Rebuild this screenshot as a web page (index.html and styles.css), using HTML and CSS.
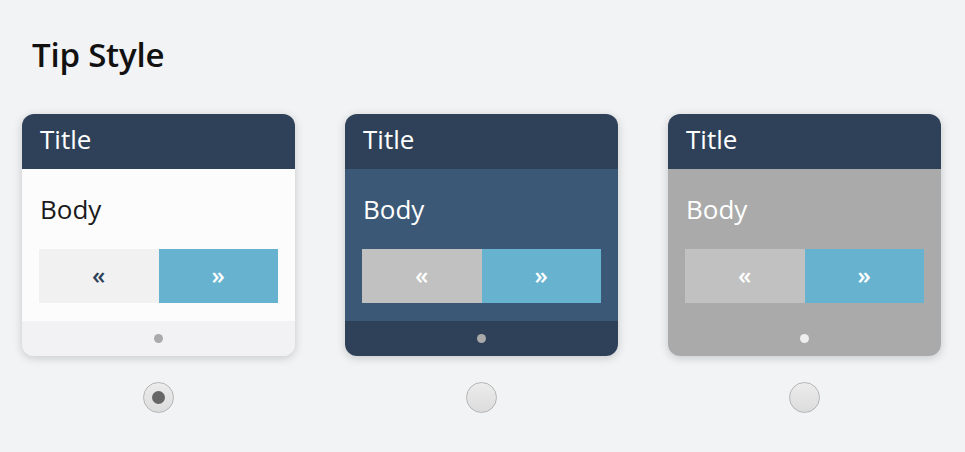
FILE: index.html
```html
<!DOCTYPE html>
<html lang="en">

<head>
    <meta charset="UTF-8">
    <meta name="viewport" content="width=device-width, initial-scale=1">
    <title>Tip Style</title>
    <link rel="stylesheet" href="styles.css">
</head>

<body>
    <h1 class="page-title">Tip Style</h1>

    <div class="styles">
        <label class="option">
            <div class="tip tip-light">
                <div class="tip-head">Title</div>
                <div class="tip-body">
                    <p>Body</p>
                    <div class="tip-nav">
                        <span class="nav-prev">&laquo;</span>
                        <span class="nav-next">&raquo;</span>
                    </div>
                </div>
                <div class="tip-foot"><span class="dot"></span></div>
            </div>
            <span class="radio checked"></span>
        </label>

        <label class="option">
            <div class="tip tip-dark">
                <div class="tip-head">Title</div>
                <div class="tip-body">
                    <p>Body</p>
                    <div class="tip-nav">
                        <span class="nav-prev">&laquo;</span>
                        <span class="nav-next">&raquo;</span>
                    </div>
                </div>
                <div class="tip-foot"><span class="dot"></span></div>
            </div>
            <span class="radio"></span>
        </label>

        <label class="option">
            <div class="tip tip-grey">
                <div class="tip-head">Title</div>
                <div class="tip-body">
                    <p>Body</p>
                    <div class="tip-nav">
                        <span class="nav-prev">&laquo;</span>
                        <span class="nav-next">&raquo;</span>
                    </div>
                </div>
                <div class="tip-foot"><span class="dot"></span></div>
            </div>
            <span class="radio"></span>
        </label>
    </div>
</body>

</html>
```

FILE: styles.css
```css
/* Base */
* {
    margin: 0;
    padding: 0;
    box-sizing: border-box;
}

body {
    font-family: "Open Sans", "Noto Sans", Arial, sans-serif;
    background-color: #f2f3f5;
    color: #1a1a1a;
    padding: 35px 22px 0 22px;
}

.page-title {
    font-size: 33px;
    font-weight: 600;
    line-height: 40px;
    letter-spacing: -0.2px;
    margin-left: 10px;
    margin-bottom: 39px;
    color: #111;
}

/* Style options */
.styles {
    display: flex;
    gap: 50px;
}

.option {
    display: flex;
    flex-direction: column;
    align-items: center;
    width: 273px;
    cursor: pointer;
}

/* Tip preview card */
.tip {
    width: 100%;
    border-radius: 12px;
    overflow: hidden;
    box-shadow: 0 2px 10px rgba(0, 0, 0, 0.18);
}

.tip-head {
    height: 55px;
    padding: 0 18px;
    background-color: #2f4159;
    color: #fff;
    font-size: 26px;
    line-height: 50px;
}

.tip-body {
    height: 152px;
    padding: 22px 17px 0 17px;
}

.tip-body p {
    font-size: 26px;
    line-height: 36px;
    padding-left: 1px;
    margin-bottom: 22px;
}

.tip-nav {
    display: flex;
    height: 54px;
}

.tip-nav span {
    flex: 1;
    display: flex;
    align-items: center;
    justify-content: center;
    font-size: 24px;
    font-weight: 600;
    padding-bottom: 3px;
}

.nav-next {
    background-color: #67b3cf;
    color: #fff;
}

.tip-foot {
    height: 35px;
    display: flex;
    align-items: center;
    justify-content: center;
}

.dot {
    width: 9px;
    height: 9px;
    border-radius: 50%;
    background-color: #aaa;
}

/* Variants */
.tip-light .tip-body {
    background-color: #fcfcfc;
    color: #1a1a1a;
}

.tip-light .nav-prev {
    background-color: #f1f1f1;
    color: #2f4159;
}

.tip-light .tip-foot {
    background-color: #f2f2f4;
}

.tip-dark .tip-body {
    background-color: #3c5877;
    color: #fff;
}

.tip-dark .nav-prev,
.tip-grey .nav-prev {
    background-color: #c1c1c1;
    color: #fff;
}

.tip-dark .tip-foot {
    background-color: #2f4159;
}

.tip-grey .tip-body,
.tip-grey .tip-foot {
    background-color: #aaa;
    color: #fff;
}

.tip-grey .dot {
    background-color: #eee;
}

/* Radio */
.radio {
    margin-top: 26px;
    width: 31px;
    height: 31px;
    border-radius: 50%;
    border: 1px solid #b5b5b5;
    background: linear-gradient(#ececec, #dcdcdc);
    display: flex;
    align-items: center;
    justify-content: center;
}

.radio.checked::after {
    content: "";
    width: 13px;
    height: 13px;
    border-radius: 50%;
    background-color: #666;
}
```
